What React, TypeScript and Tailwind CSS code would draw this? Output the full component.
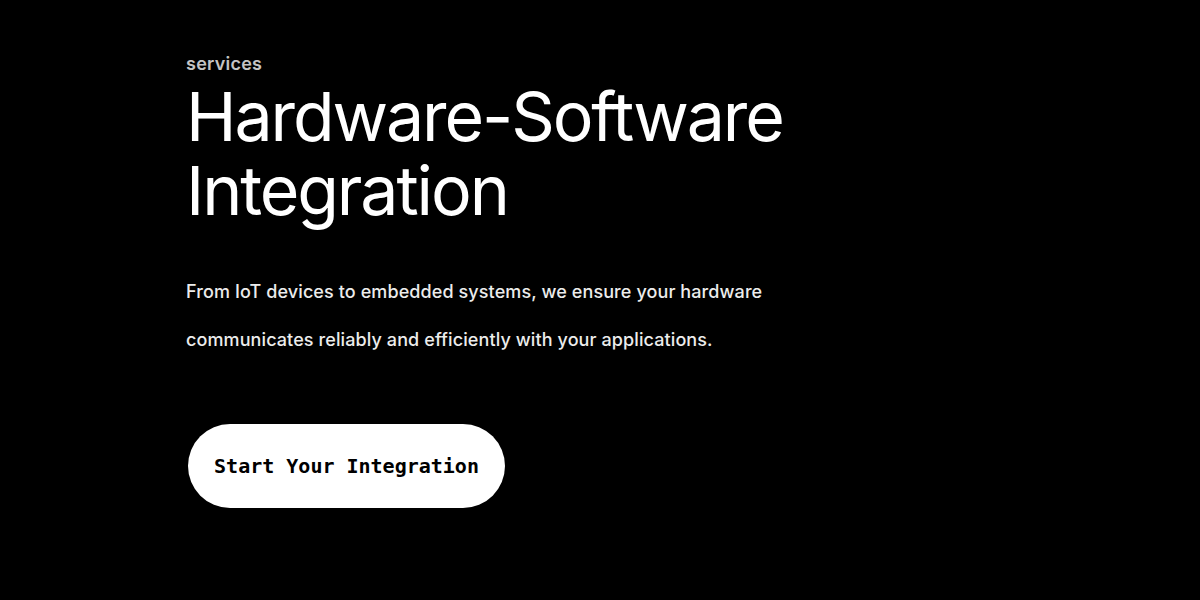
export default function App() {
  return (
    <div className="min-h-[600px] w-full bg-black font-['Inter',sans-serif] text-white">
      <div className="flex flex-col pl-[186px] pt-[51px]">
        <p className="text-[18px] font-semibold leading-[26px] tracking-[0.25px] text-[#c4c4c4]">services</p>
        <h1 className="mt-[2px] text-[68px] font-normal leading-[74px] tracking-[-2.1px] text-white">
          Hardware-Software
          <br />
          Integration
        </h1>
        <p className="mt-[41px] max-w-[640px] text-[18px] font-medium leading-[48px] tracking-[0.1px] text-[#ececec]">
          From IoT devices to embedded systems, we ensure your hardware
          <br />
          communicates reliably and efficiently with your applications.
        </p>
        <div className="mt-[60px]">
          <button className="ml-[2px] h-[84px] w-[317px] rounded-full bg-white font-['DejaVu_Sans_Mono',monospace] text-[20px] font-bold text-black">
            Start Your Integration
          </button>
        </div>
      </div>
    </div>
  );
}
